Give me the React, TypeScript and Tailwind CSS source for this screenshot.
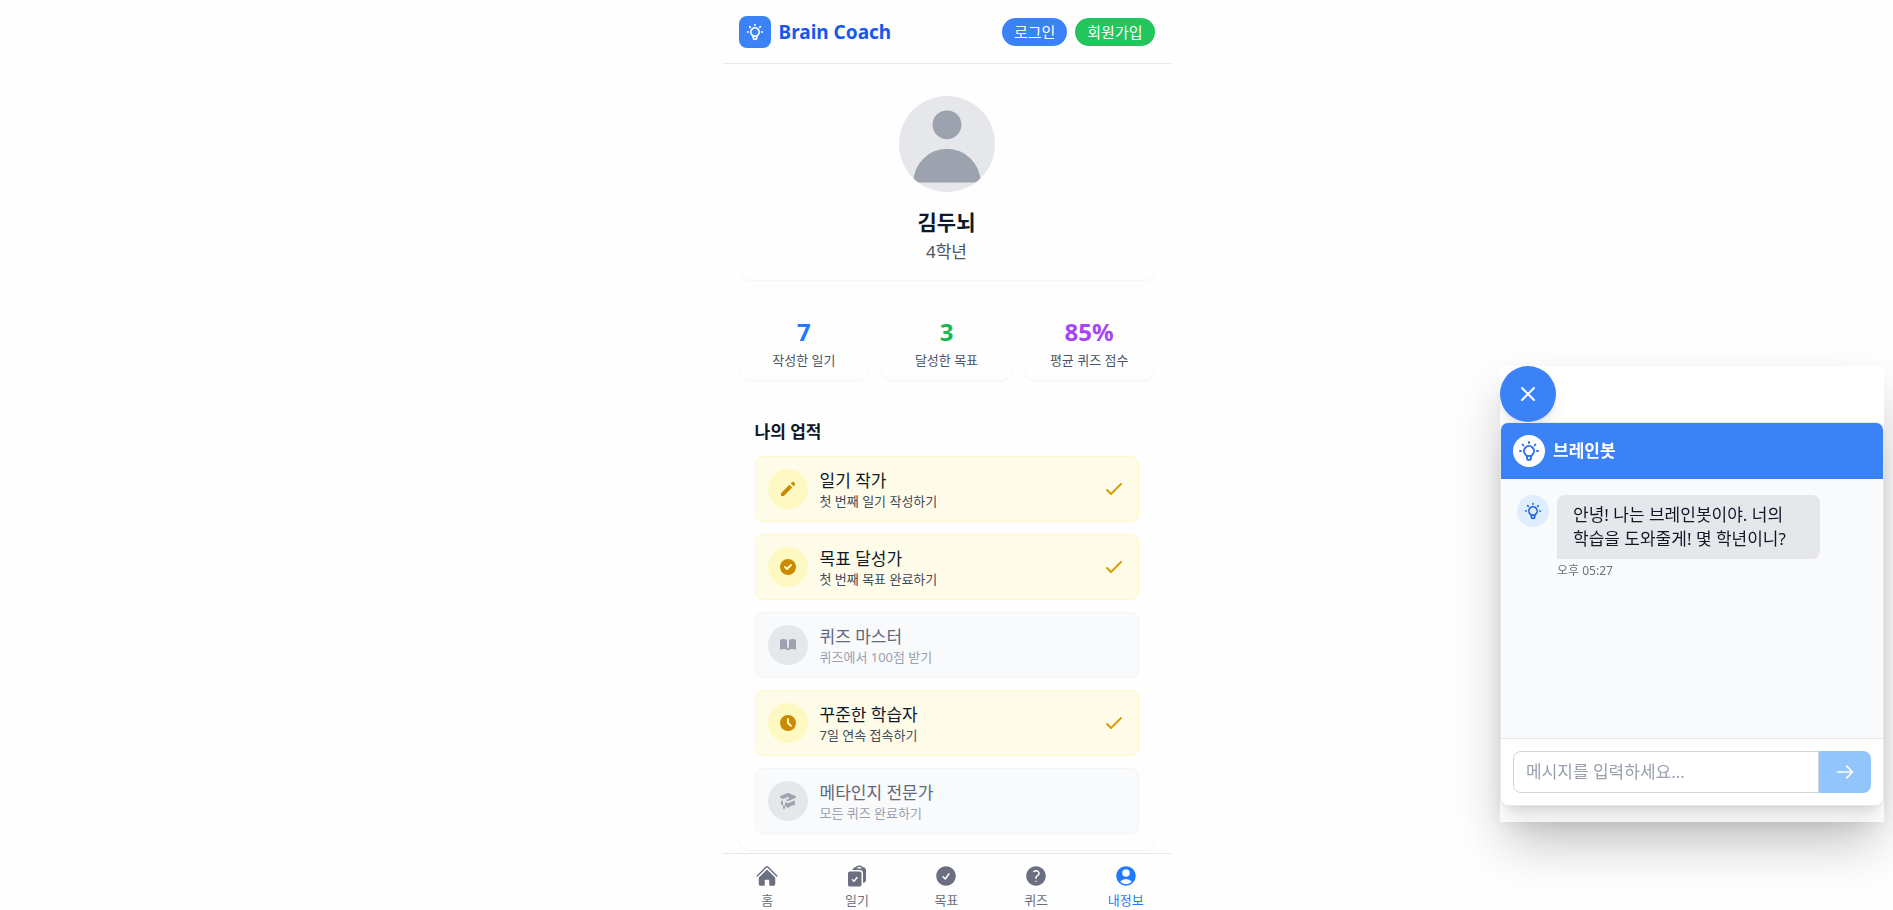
import { useState } from "react";
import type { ReactNode } from "react";
import {
  HiAcademicCap,
  HiBookOpen,
  HiCheckCircle,
  HiClock,
  HiOutlineArrowRight,
  HiOutlineCheck,
  HiOutlineLightBulb,
  HiOutlineX,
  HiPencil,
  HiUser,
} from "react-icons/hi";
import {
  HiCheckCircle as NavCheckCircle,
  HiClipboardDocumentCheck,
  HiHome,
  HiQuestionMarkCircle,
  HiUserCircle,
} from "react-icons/hi2";

type Achievement = {
  title: string;
  description: string;
  icon: ReactNode;
  earned: boolean;
};

const stats = [
  { value: "7", label: "작성한 일기", color: "text-[#2476fa]" },
  { value: "3", label: "달성한 목표", color: "text-[#16b94f]" },
  { value: "85%", label: "평균 퀴즈 점수", color: "text-[#a545f5]" },
];

const achievements: Achievement[] = [
  { title: "일기 작가", description: "첫 번째 일기 작성하기", icon: <HiPencil />, earned: true },
  { title: "목표 달성가", description: "첫 번째 목표 완료하기", icon: <HiCheckCircle />, earned: true },
  { title: "퀴즈 마스터", description: "퀴즈에서 100점 받기", icon: <HiBookOpen />, earned: false },
  { title: "꾸준한 학습자", description: "7일 연속 접속하기", icon: <HiClock />, earned: true },
  { title: "메타인지 전문가", description: "모든 퀴즈 완료하기", icon: <HiAcademicCap />, earned: false },
];

const tabs = [
  { label: "홈", icon: <HiHome />, active: false },
  { label: "일기", icon: <HiClipboardDocumentCheck />, active: false },
  { label: "목표", icon: <NavCheckCircle />, active: false },
  { label: "퀴즈", icon: <HiQuestionMarkCircle />, active: false },
  { label: "내정보", icon: <HiUserCircle />, active: true },
];

function Header() {
  return (
    <header className="flex h-16 shrink-0 items-center justify-between border-b border-[#e5e7eb] px-4">
      <a href="#home" className="flex items-center gap-2">
        <span className="flex size-8 items-center justify-center rounded-lg bg-[#3b82f6] text-white">
          <HiOutlineLightBulb className="size-5" />
        </span>
        <span className="text-[19px] leading-7 font-bold text-[#1658ee]">Brain Coach</span>
      </a>
      <div className="flex gap-2">
        <button type="button" className="rounded-full bg-[#3b82f6] px-3 py-1 text-[15px] leading-5 text-white">
          로그인
        </button>
        <button type="button" className="rounded-full bg-[#22c55e] px-3 py-1 text-[15px] leading-5 text-white">
          회원가입
        </button>
      </div>
    </header>
  );
}

function ProfileCard() {
  return (
    <section className="flex flex-col items-center rounded-xl bg-[#fefefe] p-4 shadow-[0_1px_2px_rgba(0,0,0,0.05)]">
      <div className="size-24 overflow-hidden rounded-full bg-[#e5e7eb]">
        <HiUser className="size-24 text-[#9ca3af]" />
      </div>
      <h1 className="mt-4 text-[21px] leading-7 font-bold text-[#101828]">김두뇌</h1>
      <p className="mt-1 text-[17px] leading-6 text-[#4a5565]">4학년</p>
    </section>
  );
}

function Stats() {
  return (
    <section className="grid grid-cols-3 gap-3">
      {stats.map((s) => (
        <div
          key={s.label}
          className="rounded-xl bg-[#fefefe] p-3 text-center shadow-[0_1px_2px_rgba(0,0,0,0.05)]"
        >
          <p className={`text-2xl font-bold ${s.color}`}>{s.value}</p>
          <p className="mt-1 text-[13px] leading-4 text-[#4a5565]">{s.label}</p>
        </div>
      ))}
    </section>
  );
}

function AchievementRow({ item }: { item: Achievement }) {
  return (
    <li
      className={`flex items-center rounded-lg border p-3 ${
        item.earned ? "border-[#fef9c2] bg-[#fefce8]" : "border-[#f3f4f6] bg-[#f9fafb]"
      }`}
    >
      <span
        className={`mr-3 flex size-10 items-center justify-center rounded-full text-xl ${
          item.earned ? "bg-[#fef9c2] text-[#ca8a04]" : "bg-[#e5e7eb] text-[#9ca3af]"
        }`}
      >
        {item.icon}
      </span>
      <div className="flex-1">
        <h3 className={`text-[17px] leading-6 ${item.earned ? "text-[#101828]" : "text-[#5f697a]"}`}>
          {item.title}
        </h3>
        <p className={`text-[13px] leading-4 ${item.earned ? "text-[#3f4a5a]" : "text-[#99a1af]"}`}>
          {item.description}
        </p>
      </div>
      {item.earned && <HiOutlineCheck className="size-6 text-[#d99e06]" />}
    </li>
  );
}

function TabBar() {
  return (
    <nav className="sticky bottom-0 grid grid-cols-5 border-t border-[#e5e7eb] bg-[#fefefe]">
      {tabs.map((t) => (
        <a
          key={t.label}
          href="#tab"
          className={`flex flex-col items-center gap-1 pt-2.5 pb-0.5 text-[13px] leading-4 ${
            t.active ? "text-[#1f7aff]" : "text-[#6b6f80]"
          }`}
        >
          <span className="text-2xl">{t.icon}</span>
          {t.label}
        </a>
      ))}
    </nav>
  );
}

function ChatWidget() {
  const [message, setMessage] = useState("");
  return (
    <aside className="fixed right-[9px] bottom-[88px] w-96 bg-white shadow-[0_25px_50px_-8px_rgba(0,0,0,0.27)]">
      <button
        type="button"
        aria-label="닫기"
        className="flex size-14 items-center justify-center rounded-full bg-[#3b82f6] text-white shadow-lg"
      >
        <HiOutlineX className="size-6" />
      </button>
      <div className="mb-4 flex h-96 flex-col overflow-hidden rounded-lg border border-[#e5e7eb] bg-white shadow-xl">
        <div className="flex items-center gap-2 bg-[#3b82f6] p-3 text-white">
          <span className="flex size-8 items-center justify-center rounded-full bg-white text-[#2f74ee]">
            <HiOutlineLightBulb className="size-6" />
          </span>
          <h2 className="text-[17px] leading-6 font-bold">브레인봇</h2>
        </div>
        <div className="flex flex-1 items-start gap-2 bg-[#f9fafb] p-4">
          <span className="flex size-8 shrink-0 items-center justify-center rounded-full bg-[#deeeff] text-[#2468e8]">
            <HiOutlineLightBulb className="size-5" />
          </span>
          <div className="w-3/4">
            <p className="rounded-lg rounded-bl-none bg-[#e5e7eb] px-4 py-2 text-[17px] leading-6 break-keep text-[#101828]">
              안녕! 나는 브레인봇이야. 너의 학습을 도와줄게! 몇 학년이니?
            </p>
            <p className="mt-1 text-xs text-[#6a7282]">오후 05:27</p>
          </div>
        </div>
        <form className="flex border-t border-[#e5e7eb] p-3" onSubmit={(e) => e.preventDefault()}>
          <input
            type="text"
            aria-label="메시지"
            value={message}
            onChange={(e) => setMessage(e.target.value)}
            placeholder="메시지를 입력하세요..."
            className="min-w-0 flex-1 rounded-l-lg border border-[#d1d5db] px-3 py-2 text-[17px] leading-6 placeholder:text-[#99a1af]"
          />
          <button type="submit" aria-label="보내기" className="rounded-r-lg bg-[#93c5fd] px-4 text-white">
            <HiOutlineArrowRight className="size-5" />
          </button>
        </form>
      </div>
    </aside>
  );
}

export default function App() {
  return (
    <div className="min-h-screen bg-[#fefefe] font-['Noto_Sans','Noto_Sans_CJK_KR',sans-serif]">
      <div className="mx-auto flex min-h-screen max-w-md flex-col">
        <Header />
        <main className="flex flex-1 flex-col gap-6 px-4 pt-4">
          <ProfileCard />
          <Stats />
          <section className="rounded-xl bg-[#fefefe] p-4 shadow-[0_1px_2px_rgba(0,0,0,0.05)]">
            <h2 className="mb-3 text-[17px] leading-6 font-semibold text-[#101828]">나의 업적</h2>
            <ul className="flex flex-col gap-3">
              {achievements.map((a) => (
                <AchievementRow key={a.title} item={a} />
              ))}
            </ul>
          </section>
        </main>
        <TabBar />
      </div>
      <ChatWidget />
    </div>
  );
}
